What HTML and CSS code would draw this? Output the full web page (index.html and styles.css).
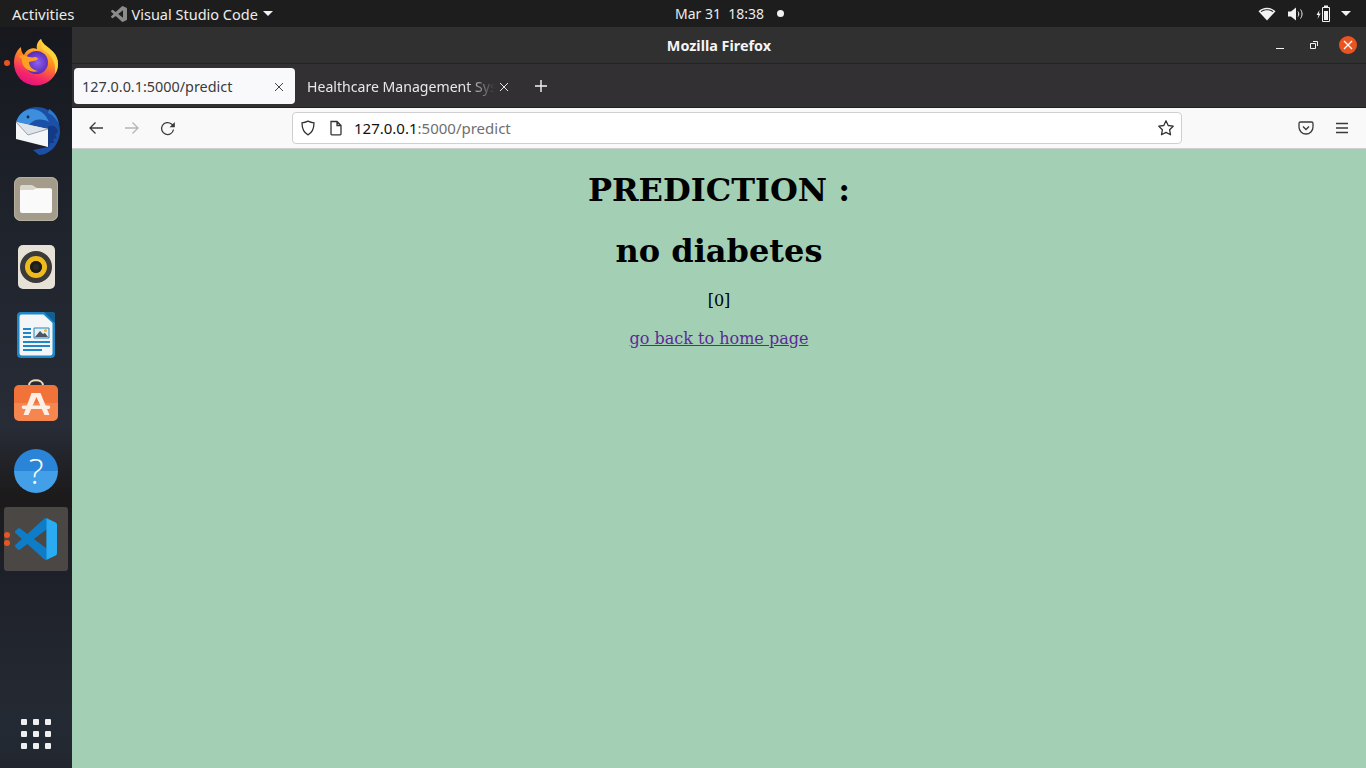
FILE: index.html
```html
<!DOCTYPE html>
<html lang="en">
<head>
    <meta charset="UTF-8">
    <meta name="viewport" content="width=device-width, initial-scale=1.0">
    <title>Mozilla Firefox</title>
    <link rel="stylesheet" href="styles.css">
</head>
<body>
    <header class="topbar">
        <div class="topbar-left">
            <span class="activities">Activities</span>
            <span class="app-menu">
                <svg width="18" height="18" viewBox="-1.500 -1.500 27 27"><path fill="#8b8b8b" d="M23.150 2.587 18.210.21a1.494 1.494 0 0 0-1.705.29l-9.460 8.630-4.120-3.128a.999.999 0 0 0-1.276.057L.327 7.261A1 1 0 0 0 .326 8.740L3.899 12 .326 15.260a1 1 0 0 0 .001 1.479L1.650 17.940a.999.999 0 0 0 1.276.057l4.120-3.128 9.460 8.630a1.492 1.492 0 0 0 1.704.29l4.942-2.377A1.500 1.500 0 0 0 24 20.060V3.939a1.500 1.500 0 0 0-.85-1.352zm-5.146 14.861L10.826 12l7.178-5.448v10.896z"/></svg>
                <span class="app-name">Visual Studio Code</span>
                <i class="caret"></i>
            </span>
        </div>
        <div class="clock">Mar 31&nbsp;&nbsp;18:38<i class="clock-dot"></i></div>
        <div class="tray">
            <svg width="18" height="14" viewBox="0 0 18 14"><path fill="#f2f2f2" d="M9 13.500 .5 4.200C2.800 2 5.700 .8 9 .8s6.200 1.200 8.500 3.400z"/><path fill="#1d1d1d" d="M2.600 4.200C4.400 2.900 6.500 2.200 9 2.200s4.600.7 6.400 2l-.8.8C13 3.900 11.200 3.300 9 3.300S5 3.900 3.400 5z"/></svg>
            <svg width="16" height="14" viewBox="0 0 16 14"><path fill="#f2f2f2" d="M0 4.500h3L8 .5v13l-5-4H0z"/><path fill="none" stroke="#f2f2f2" d="M10 4.500c1 1.500 1 3.500 0 5M12.500 2.500c2 2.700 2 6.300 0 9"/></svg>
            <svg width="15" height="18" viewBox="0 0 15 18"><path fill="#f2f2f2" d="M3.500 5 .5 10h2l-1 4 3.200-5.500H2.800z"/><path fill="none" stroke="#f2f2f2" d="M6.500 2.500h7v14h-7z"/><path fill="#f2f2f2" d="M8 .5h4v2H8zM8 6h4v9H8z"/></svg>
            <i class="caret tray-caret"></i>
        </div>
    </header>

    <div class="desktop">
        <nav class="dock">
            <div class="dock-item">
                <i class="run-dot"></i>
                <svg width="48" height="48" viewBox="0 1 48 48">
                    <defs>
                        <linearGradient id="foxOuter" x1="0.750" y1="0" x2="0.350" y2="1"><stop offset="0" stop-color="#ffe23f"/><stop offset="0.450" stop-color="#ff8a1f"/><stop offset="0.800" stop-color="#f5266a"/><stop offset="1" stop-color="#e3127f"/></linearGradient>
                        <radialGradient id="foxGlobe" cx="0.550" cy="0.500"><stop offset="0" stop-color="#8f5ff0"/><stop offset="1" stop-color="#5a2bb5"/></radialGradient>
                    </defs>
                    <path fill="url(#foxOuter)" d="M24 47.500A22 22 0 0 1 2 25c0-6 2-12 7-16 0 4 1 6 3 8 2-5 8-8 13-6-1-4 1-8 4-10 1 5 6 7 10 11 5 4 7 9 7 14a22 22 0 0 1-22 21.500z"/>
                    <path fill="#ffd23a" d="M29 1c1 5 6 7 10 11 5 4 7 9 7 14 0 4-1 7-3 10 1-8-1-17-9-22-3-2-6-6-5-13z"/>
                    <circle cx="24.500" cy="24.500" r="11.500" fill="url(#foxGlobe)"/>
                    <path fill="#ffa024" d="M6 18c3-1 6-1 8 0 3 1 6 2 9 1 2 0 3 1 3 2-1 1-3 2-5 2l-4 1c0 4 3 8 9 9-6 2-12-1-15-6-1-2-1-4-1-6-2-2-3-3-4-3z"/>
                </svg>
            </div>
            <div class="dock-item">
                <svg width="50" height="50" viewBox="0 0 50 50">
                    <path fill="#1c4fa6" d="M5 16C8 7 16 1 26 1c13 0 23 11 23 24 0 13-10 24-21 24l-6-5 15-3V23L5 16z"/>
                    <path fill="#3b8fdc" d="M5 16C8 8 14 3 21 3c7 0 14 5 17 13-8-4-15-3-20 3L5 16z"/>
                    <path fill="#123a85" d="M37 21c5-3 9 0 10 5l-3 3 2 3-4 1 1 4-4 0-1 4-1 0z"/>
                    <path fill="#2c77cf" d="M38 3c5 3 9 8 10 15-3-5-6-9-11-11z"/>
                    <circle cx="17" cy="11" r="1.400" fill="#0e2a5a"/>
                    <path fill="#f5f6f8" d="M5 16l32 7v18L5 33z"/>
                    <path fill="#dfe3ea" d="M5 16l32 7-20 6z"/>
                    <path fill="none" stroke="#9aa0ad" d="M5 16l12 13 20-6"/>
                </svg>
            </div>
            <div class="dock-item">
                <div class="files-icon"><svg width="32" height="28" viewBox="0 0 32 28"><path fill="#d9d6cd" d="M2 0h10l5 3h13a2 2 0 0 1 2 2v5H0V2a2 2 0 0 1 2-2z"/><path fill="#fafafa" d="M0 5h13l3-1.500h14a2 2 0 0 1 2 2V26a2 2 0 0 1-2 2H2a2 2 0 0 1-2-2z"/></svg></div>
            </div>
            <div class="dock-item">
                <div class="speaker-icon"><i class="speaker-cone"><i class="speaker-hub"></i></i></div>
            </div>
            <div class="dock-item">
                <svg width="38" height="46" viewBox="0 0 38 46">
                    <path fill="#1f87c6" d="M4 0h24l10 10v32a4 4 0 0 1-4 4H4a4 4 0 0 1-4-4V4a4 4 0 0 1 4-4z"/>
                    <path fill="#f3f5f7" d="M4 2.500h22.500L35.500 11v30a2.500 2.500 0 0 1-2.500 2.500H5A2.500 2.500 0 0 1 2.500 41V5A2.500 2.500 0 0 1 4 2.500z"/>
                    <path fill="#135f8f" d="M27 0h9a2 2 0 0 1 2 2v9z"/>
                    <path fill="#1f87c6" d="M6 16h8v2H6zM6 20h8v2H6zM6 24h8v2H6zM6 29h27v2H6zM6 33h27v2H6zM6 37h19v2H6z"/>
                    <path fill="#e9eef2" stroke="#1f87c6" d="M17 16h15v10H17z"/>
                    <path fill="#4d5560" d="M18 25l5-6 3 3 2-1 3 4z"/>
                    <circle cx="28.500" cy="18.500" r="1.500" fill="#f2b632"/>
                </svg>
            </div>
            <div class="dock-item">
                <svg width="44" height="48" viewBox="0 0 44 48">
                    <path fill="none" stroke="#efd9b8" stroke-width="2" d="M15 6.500c0-7 14-7 14 0"/>
                    <path fill="#f2733a" d="M5 6h34a5 5 0 0 1 5 5v13H0V11a5 5 0 0 1 5-5z"/>
                    <path fill="#f6864f" d="M0 24h44v13a5 5 0 0 1-5 5H5a5 5 0 0 1-5-5z"/>
                    <path fill="#fdeee6" d="M17.500 14h9l9 22h-5l-8-18-8 18H9.500z"/>
                    <path fill="#fdeee6" d="M9.500 26.500h25a1.800 1.800 0 0 1 0 3.600h-25a1.800 1.800 0 0 1 0-3.600z"/>
                </svg>
            </div>
            <div class="dock-item">
                <div class="help-icon">?</div>
            </div>
            <div class="dock-item is-active">
                <i class="run-dot run-dot-top"></i>
                <i class="run-dot run-dot-bottom"></i>
                <svg width="42" height="42" viewBox="0 0 24 24">
                    <path fill="#0e7cc7" d="M23.150 2.587 18.210.21a1.494 1.494 0 0 0-1.705.29l-9.460 8.630-4.120-3.128a.999.999 0 0 0-1.276.057L.327 7.261A1 1 0 0 0 .326 8.740L3.899 12 .326 15.260a1 1 0 0 0 .001 1.479L1.650 17.940a.999.999 0 0 0 1.276.057l4.120-3.128 9.460 8.630a1.492 1.492 0 0 0 1.704.29l4.942-2.377A1.500 1.500 0 0 0 24 20.060V3.939a1.500 1.500 0 0 0-.85-1.352zm-5.146 14.861L10.826 12l7.178-5.448v10.896z"/>
                    <path fill="#2bacf2" d="M18 0.100 23.150 2.587A1.500 1.500 0 0 1 24 3.939V20.060a1.500 1.500 0 0 1-.85 1.352L18 23.900z"/>
                </svg>
            </div>
            <div class="dock-spacer"></div>
            <div class="app-grid">
                <i></i><i></i><i></i><i></i><i></i><i></i><i></i><i></i><i></i>
            </div>
        </nav>

        <main class="window">
            <div class="titlebar">
                <span class="title">Mozilla Firefox</span>
                <div class="window-buttons">
                    <svg width="16" height="16" viewBox="0 0 16 16"><path stroke="#f2f2f2" d="M4 11.500h8"/></svg>
                    <svg width="16" height="16" viewBox="0 0 16 16"><path fill="none" stroke="#f2f2f2" d="M4.500 6.500h5v5h-5zM7 4.500h4.500V9"/></svg>
                    <span class="close-btn"><svg width="12" height="12" viewBox="0 0 12 12"><path stroke="#fff" stroke-width="1.300" d="M2 2l8 8M10 2l-8 8"/></svg></span>
                </div>
            </div>

            <div class="tabbar">
                <div class="tab tab-active">
                    <span class="tab-label">127.0.0.1:5000/predict</span>
                    <svg class="tab-close" width="10" height="10" viewBox="0 0 10 10"><path stroke="#444" d="M1 1l8 8M9 1l-8 8"/></svg>
                </div>
                <div class="tab tab-other">
                    <span class="tab-label tab-label-fade">Healthcare Management System</span>
                    <svg class="tab-close" width="10" height="10" viewBox="0 0 10 10"><path stroke="#e8e8e8" d="M1 1l8 8M9 1l-8 8"/></svg>
                </div>
                <svg class="new-tab" width="14" height="14" viewBox="0 0 14 14"><path stroke="#f4f4f4" stroke-width="1.400" d="M7 1v12M1 7h12"/></svg>
            </div>

            <div class="navbar">
                <div class="nav-buttons">
                    <svg width="16" height="16" viewBox="0 0 16 16"><path fill="none" stroke="#3a3a3a" stroke-width="1.300" d="M15 8H2M7.500 2.500 2 8l5.500 5.500"/></svg>
                    <svg width="16" height="16" viewBox="0 0 16 16"><path fill="none" stroke="#b5b5b5" stroke-width="1.300" d="M1 8h13M8.500 2.500 14 8l-5.500 5.500"/></svg>
                    <svg width="16" height="16" viewBox="0 -1 16 16"><path fill="none" stroke="#3a3a3a" stroke-width="1.300" d="M13.500 8.500A6 6 0 1 1 11.500 3L14 5"/><path fill="#3a3a3a" d="M14.800 1v5.200H9.600z"/></svg>
                </div>
                <div class="urlbar">
                    <svg class="url-shield" width="16" height="16" viewBox="0 0 16 16"><path fill="none" stroke="#333" stroke-width="1.300" d="M8 1.200c2 1 4 1.500 6 1.600 0 6-1.500 9.800-6 12-4.500-2.200-6-6-6-12 2-.1 4-.6 6-1.600z"/></svg>
                    <svg class="url-page" width="14" height="16" viewBox="0 0 14 16"><path fill="none" stroke="#333" stroke-width="1.300" d="M2 1.500h6l4 4V14a.8.8 0 0 1-.8.800H2.800A.8.800 0 0 1 2 14zM8 1.500v4h4"/></svg>
                    <span class="url-text"><b>127.0.0.1</b>:5000/predict</span>
                    <svg class="url-star" width="18" height="18" viewBox="0 0 18 18"><path fill="none" stroke="#333" stroke-width="1.300" stroke-linejoin="round" d="M9 1.800l2.200 4.700 5 .7-3.600 3.500.9 5.100L9 13.400l-4.500 2.400.9-5.100L1.800 7.200l5-.7z"/></svg>
                </div>
                <div class="nav-right">
                    <svg width="16" height="16" viewBox="0 0 16 16"><path fill="none" stroke="#3a3a3a" stroke-width="1.300" d="M2.500 2h11A1.500 1.500 0 0 1 15 3.500V7a7 7 0 0 1-14 0V3.500A1.500 1.500 0 0 1 2.500 2z"/><path fill="none" stroke="#3a3a3a" stroke-width="1.300" d="M5 6.500l3 3 3-3"/></svg>
                    <svg width="16" height="16" viewBox="0 0 16 16"><path stroke="#3a3a3a" stroke-width="1.300" d="M2 3.500h12M2 8h12M2 12.500h12"/></svg>
                </div>
            </div>

            <div class="page">
                <h1>PREDICTION :</h1>
                <h1 class="result">no diabetes</h1>
                <p>[0]</p>
                <p><a href="#">go back to home page</a></p>
            </div>
        </main>
    </div>
</body>
</html>
```

FILE: styles.css
```css
* {
    box-sizing: border-box;
}
html, body {
    height: 100%;
}
body {
    margin: 0;
    display: flex;
    flex-direction: column;
    height: 768px;
    overflow: hidden;
    font-family: "Noto Sans", "Open Sans", sans-serif;
    background-color: #1d2026;
}

/* gnome top bar */
.topbar {
    position: relative;
    height: 27px;
    flex: none;
    display: flex;
    align-items: center;
    justify-content: space-between;
    padding: 0 15px 0 12px;
    background-color: #1d1d1d;
    color: #ececec;
    font-size: 14px;
}
.topbar-left {
    display: flex;
    align-items: center;
    gap: 35px;
}
.activities {
    font-size: 15px;
}
.app-menu {
    display: flex;
    align-items: center;
    gap: 4px;
}
.app-name {
    font-size: 14.500px;
}
.app-menu .caret {
    margin-left: 1px;
}
.caret {
    display: inline-block;
    width: 0;
    height: 0;
    border-left: 5px solid transparent;
    border-right: 5px solid transparent;
    border-top: 5px solid #f2f2f2;
}
.clock {
    position: absolute;
    left: 675px;
    top: 4px;
    display: flex;
    align-items: center;
}
.clock-dot {
    width: 7px;
    height: 7px;
    margin-left: 13px;
    border-radius: 50%;
    background-color: #f2f2f2;
}
.tray {
    display: flex;
    align-items: center;
    gap: 12px;
}
.tray-caret {
    margin-left: -2px;
}

.desktop {
    flex: 1;
    display: flex;
    min-height: 0;
}

/* dock */
.dock {
    width: 72px;
    flex: none;
    display: flex;
    flex-direction: column;
    padding-top: 2px;
    background: linear-gradient(#16181e 0, #1e222b 180px, #272c36 400px, #1c1a1a 470px, #1e2029 540px, #242a33 700px, #1f232c 768px);
}
.dock-item {
    position: relative;
    height: 68px;
    flex: none;
    display: flex;
    align-items: center;
    justify-content: center;
}
.dock-item.is-active {
    width: 64px;
    height: 64px;
    margin: 2px 0 2px 4px;
    border-radius: 3px;
    background-color: #4a4744;
}
.run-dot {
    position: absolute;
    left: 4px;
    top: 31px;
    width: 6px;
    height: 6px;
    border-radius: 50%;
    background-color: #e95420;
}
.run-dot-top {
    left: 0;
    top: 25px;
}
.run-dot-bottom {
    left: 0;
    top: 33px;
}
.files-icon {
    width: 44px;
    height: 44px;
    display: flex;
    align-items: center;
    justify-content: center;
    border-radius: 7px;
    background-color: #a39c8b;
    box-shadow: inset 0 0 0 1px #b5af9f;
}
.speaker-icon {
    width: 37px;
    height: 44px;
    display: flex;
    align-items: center;
    justify-content: center;
    border-radius: 5px;
    background-color: #e6e2d8;
}
.speaker-cone {
    width: 32px;
    height: 32px;
    display: flex;
    align-items: center;
    justify-content: center;
    border-radius: 50%;
    border: 5px solid #3b3a38;
    background-color: #eebb1f;
}
.speaker-hub {
    width: 12px;
    height: 12px;
    border-radius: 50%;
    background-color: #2d2a26;
    box-shadow: inset 0 0 0 3px #1f1d1a;
}
.help-icon {
    width: 44px;
    height: 44px;
    border-radius: 50%;
    text-align: center;
    color: #fff;
    font-family: "Open Sans", sans-serif;
    font-size: 35px;
    font-weight: 300;
    line-height: 44px;
    background: linear-gradient(#2a85d8 50%, #43a0e8 50%);
}
.dock-spacer {
    flex: 1;
}
.app-grid {
    display: grid;
    grid-template-columns: repeat(3, 6px);
    gap: 6px;
    justify-content: center;
    padding-bottom: 19px;
}
.app-grid i {
    height: 6px;
    border-radius: 1px;
    background-color: #efefef;
}

/* firefox window */
.window {
    flex: 1;
    min-width: 0;
    display: flex;
    flex-direction: column;
}
.titlebar {
    position: relative;
    height: 37px;
    flex: none;
    display: flex;
    align-items: center;
    justify-content: center;
    background-color: #303030;
    border-bottom: 1px solid #242424;
    color: #f5f5f5;
    font-size: 14.400px;
    font-weight: bold;
}
.window-buttons {
    position: absolute;
    right: 9px;
    top: 9px;
    display: flex;
    align-items: center;
    gap: 18px;
}
.close-btn {
    width: 18px;
    height: 18px;
    margin-left: -1px;
    display: flex;
    align-items: center;
    justify-content: center;
    border-radius: 50%;
    background-color: #e95420;
}
.tabbar {
    height: 44px;
    flex: none;
    display: flex;
    align-items: center;
    padding: 4px 2px;
    background-color: #323032;
    border-bottom: 1px solid #1f1f1f;
}
.tab {
    width: 221px;
    height: 36px;
    display: flex;
    align-items: center;
    gap: 4px;
    padding: 2px 8px 0;
    color: #e8e8e8;
    font-size: 14.400px;
}
.tab-other {
    padding-left: 12px;
    padding-right: 7px;
    font-size: 14.100px;
}
.tab-active {
    border-radius: 4px;
    background-color: #f9f9fb;
    color: #3b3b3b;
}
.tab-active .tab-close {
    margin-right: 3px;
}
.tab-label {
    flex: 1;
    overflow: hidden;
    white-space: nowrap;
}
.tab-label-fade {
    -webkit-mask-image: linear-gradient(to right, #000 85%, transparent);
    mask-image: linear-gradient(to right, #000 85%, transparent);
}
.new-tab {
    margin-left: 18px;
}
.navbar {
    height: 41px;
    flex: none;
    display: flex;
    align-items: center;
    background-color: #f9f9fa;
    border-bottom: 1px solid #cfcfd1;
}
.nav-buttons {
    width: 220px;
    display: flex;
    gap: 20px;
    padding-left: 16px;
}
.urlbar {
    width: 890px;
    height: 32px;
    display: flex;
    align-items: center;
    padding: 0 6px 0 7px;
    border: 1px solid #cfcfd1;
    border-radius: 4px;
    background-color: #fff;
    font-size: 15px;
    color: #6f6f6f;
}
.url-page {
    margin-left: 13px;
}
.url-text {
    flex: 1;
    margin-left: 11px;
}
.url-text b {
    font-weight: normal;
    color: #111;
}
.nav-right {
    flex: 1;
    display: flex;
    justify-content: flex-end;
    gap: 20px;
    padding-right: 16px;
}

/* the flask page */
.page {
    flex: 1;
    padding: 8px;
    background-color: #a3cfb4;
    text-align: center;
    font-family: "DejaVu Serif", serif;
    font-size: 16px;
    color: #000;
}
.page h1 {
    margin: 23px 0;
    font-size: 32px;
    line-height: 38px;
}
.page h1:first-child {
    margin-top: 14px;
}
.page h1.result {
    margin-bottom: 21px;
}
.page p {
    margin: 19px 0;
    line-height: 19px;
}
.page a {
    color: #5b2a96;
}
```
